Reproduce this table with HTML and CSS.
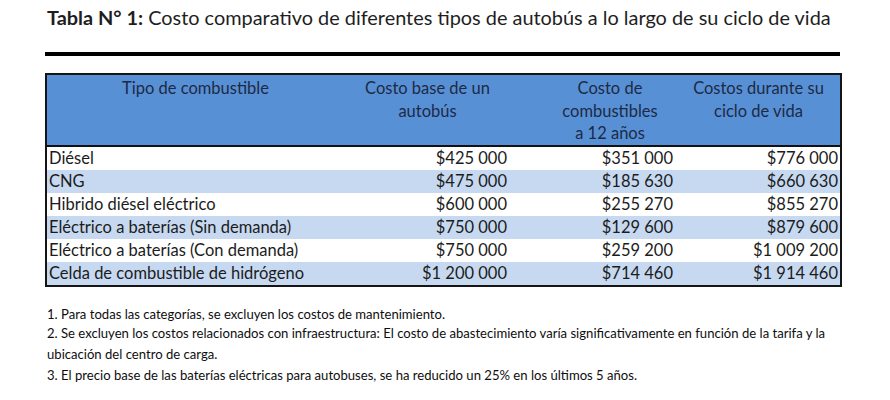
FILE: index.html
```html
<!DOCTYPE html>
<html lang="es">
<head>
<meta charset="utf-8">
<link rel="stylesheet" href="styles.css">
</head>
<body>
<div class="page">
  <h1 class="title"><b>Tabla N° 1:</b> Costo comparativo de diferentes tipos de autobús a lo largo de su ciclo de vida</h1>
  <div class="rule"></div>
  <table class="costs">
    <colgroup>
      <col class="c1"><col class="c2"><col class="c3"><col class="c4">
    </colgroup>
    <thead>
      <tr>
        <th>Tipo de combustible</th>
        <th>Costo base de un<br>autobús</th>
        <th class="h3">Costo de<br>combustibles<br>a 12 años</th>
        <th>Costos durante su<br>ciclo de vida</th>
      </tr>
    </thead>
    <tbody>
      <tr><td>Diésel</td><td class="n2">$425 000</td><td class="n3">$351 000</td><td class="n4">$776 000</td></tr>
      <tr class="alt"><td>CNG</td><td class="n2">$475 000</td><td class="n3">$185 630</td><td class="n4">$660 630</td></tr>
      <tr><td>Hibrido diésel eléctrico</td><td class="n2">$600 000</td><td class="n3">$255 270</td><td class="n4">$855 270</td></tr>
      <tr class="alt"><td>Eléctrico a baterías (Sin demanda)</td><td class="n2">$750 000</td><td class="n3">$129 600</td><td class="n4">$879 600</td></tr>
      <tr><td>Eléctrico a baterías (Con demanda)</td><td class="n2">$750 000</td><td class="n3">$259 200</td><td class="n4">$1 009 200</td></tr>
      <tr class="alt"><td>Celda de combustible de hidrógeno</td><td class="n2">$1 200 000</td><td class="n3">$714 460</td><td class="n4">$1 914 460</td></tr>
    </tbody>
  </table>
  <div class="notes">
    <p class="n-first">1. Para todas las categorías, se excluyen los costos de mantenimiento.</p>
    <p>2. Se excluyen los costos relacionados con infraestructura: El costo de abastecimiento varía significativamente en función de la tarifa y la<br>ubicación del centro de carga.</p>
    <p>3. El precio base de las baterías eléctricas para autobuses, se ha reducido un 25% en los últimos 5 años.</p>
  </div>
</div>
</body>
</html>
```

FILE: styles.css
```css
html, body {
  margin: 0;
  padding: 0;
  background: #ffffff;
}

.page {
  padding: 5px 0 0 45px;
  width: 795px;
  font-family: Lato, "Open Sans", sans-serif;
  color: #1c1c1c;
}

.title {
  margin: 0 0 0 2px;
  font-size: 19.9px;
  font-weight: 400;
  line-height: 24px;
  color: #1e1e1e;
  white-space: nowrap;
}

.title b {
  font-weight: 700;
}

.rule {
  margin-top: 23px;
  height: 4px;
  background: #000;
}

.costs {
  margin-top: 17px;
  width: 795px;
  border-collapse: collapse;
  table-layout: fixed;
  border: 2px solid #151515;
  font-size: 16.5px;
}

.c1 { width: 298px; }
.c2 { width: 167px; }
.c3 { width: 166px; }
.c4 { width: 164px; }

.costs thead th {
  background: #5890d6;
  color: #1d2a44;
  font-weight: 400;
  text-align: center;
  vertical-align: top;
  height: 65px;
  padding: 2px 0 0 0;
  line-height: 22.5px;
  border-bottom: 2px solid #111;
}

.costs thead th.h3 {
  padding-left: 32px;
}

.costs td {
  height: 23px;
  padding: 0 0 0 2px;
  line-height: 23px;
  white-space: nowrap;
  color: #1c1c1c;
}

.costs tr.alt td {
  background: #c6d9f1;
}

.costs td.n2 { text-align: right; padding-right: 4px; }
.costs td.n3 { text-align: right; padding-right: 4px; }
.costs td.n4 { text-align: right; padding-right: 2px; }

.notes {
  margin-top: 18px;
  margin-left: 2px;
  width: 790px;
  font-size: 13.1px;
  color: #0e0e0e;
  white-space: nowrap;
}

.notes p {
  margin: 0;
  line-height: 21px;
}

.notes p.n-first {
  line-height: 18px;
}
```
